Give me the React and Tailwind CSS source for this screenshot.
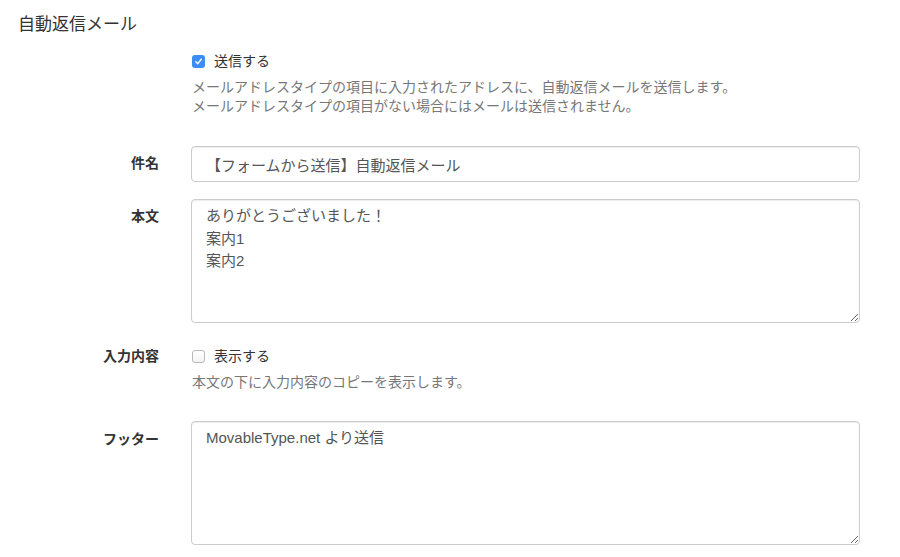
import React from "react";

function Check({ checked }) {
  if (checked) {
    return (
      <span className="flex h-[13px] w-[13px] items-center justify-center rounded-[3px] bg-[#3b8ef5]">
        <svg width="9" height="9" viewBox="0 0 9 9" fill="none">
          <path d="M1.8 4.8 L3.7 6.7 L7.3 2.3" stroke="#fff" strokeWidth="1.4" strokeLinecap="round" strokeLinejoin="round" />
        </svg>
      </span>
    );
  }
  return <span className="block h-[13px] w-[13px] rounded-[3px] border border-[#b9b9b9] bg-gradient-to-b from-white to-[#f3f3f3]" />;
}

export default function App() {
  const font = { fontFamily: '"Liberation Sans", "Noto Sans CJK JP", sans-serif' };
  const field =
    "w-[669px] rounded-[4px] border border-[#cccccc] bg-white px-[14px] text-[15px] text-[#555] shadow-[inset_0_1px_1px_rgba(0,0,0,0.075)] outline-none";
  return (
    <div className="min-h-[557px] w-[900px] bg-white pl-[18px] pt-[13px] text-[#333]" style={font}>
      <div className="text-[17px] leading-[24px]">自動返信メール</div>

      <div className="mt-[14px] flex">
        <div className="w-[173px] shrink-0" />
        <div className="flex flex-col">
          <label className="flex h-[20px] items-center gap-[9px] pl-[1px] text-[14px]">
            <Check checked />
            <span>送信する</span>
          </label>
          <div className="mt-[7px] pl-[1px] text-[14px] leading-[19px] text-[#777]">
            <div>メールアドレスタイプの項目に入力されたアドレスに、自動返信メールを送信します。</div>
            <div>メールアドレスタイプの項目がない場合にはメールは送信されません。</div>
          </div>
        </div>
      </div>

      <div className="mt-[30px] flex">
        <div className="w-[173px] shrink-0 pr-[32px] pt-[7px] text-right text-[14px] font-bold leading-[20px]">件名</div>
        <input
          className={field + " h-[36px] py-[6px] leading-[22px]"}
          defaultValue="【フォームから送信】自動返信メール"
          style={font}
        />
      </div>

      <div className="mt-[17px] flex">
        <div className="w-[173px] shrink-0 pr-[32px] pt-[7px] text-right text-[14px] font-bold leading-[20px]">本文</div>
        <textarea
          className={field + " block h-[124px] py-[5px] leading-[1.5]"}
          defaultValue={"ありがとうございました！\n案内1\n案内2"}
          style={font}
        />
      </div>

      <div className="mt-[23px] flex">
        <div className="w-[173px] shrink-0 pr-[32px] text-right text-[14px] font-bold leading-[20px]">入力内容</div>
        <div className="flex flex-col">
          <label className="flex h-[20px] items-center gap-[9px] pl-[1px] text-[14px]">
            <Check checked={false} />
            <span>表示する</span>
          </label>
          <div className="mt-[7px] pl-[1px] text-[14px] leading-[19px] text-[#777]">
            本文の下に入力内容のコピーを表示します。
          </div>
        </div>
      </div>

      <div className="mt-[29px] flex">
        <div className="w-[173px] shrink-0 pr-[32px] pt-[8px] text-right text-[14px] font-bold leading-[20px]">フッター</div>
        <textarea
          className={field + " block h-[124px] py-[5px] leading-[1.5]"}
          defaultValue={"MovableType.net より送信"}
          style={font}
        />
      </div>
    </div>
  );
}
